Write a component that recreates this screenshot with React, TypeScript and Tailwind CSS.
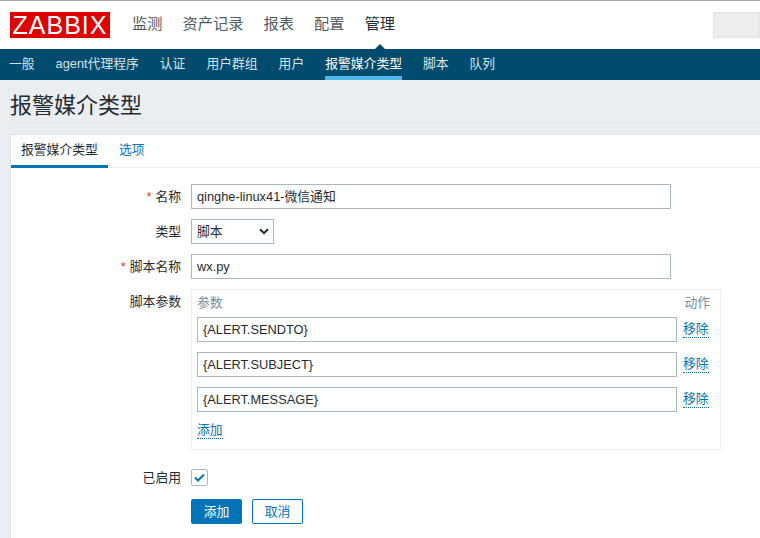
import React from 'react';

const FONT = "font-['Liberation_Sans','Noto_Sans_CJK_SC',sans-serif]";

const mainNav = ['监测', '资产记录', '报表', '配置', '管理'];
const subNav = ['一般', 'agent代理程序', '认证', '用户群组', '用户', '报警媒介类型', '脚本', '队列'];
const params = ['{ALERT.SENDTO}', '{ALERT.SUBJECT}', '{ALERT.MESSAGE}'];

const Label = ({ text, required }: { text: string; required?: boolean }) => (
    <div className="w-[170px] shrink-0 text-right text-[12.8px] leading-[25px] text-[#1f2c33]">
        {required && <span className="mr-1 text-[#e33734]">*</span>}
        {text}
    </div>
);

const App = () => {
    return (
        <div className={`${FONT} h-[538px] w-[760px] overflow-hidden bg-[#ebeef0]`}>
            {/* Top nav */}
            <div className="flex h-[49px] items-start border-t border-[#a3a3a3] bg-white">
                <div className="ml-[10px] mt-[11px] flex h-[26px] w-[100px] items-center justify-center bg-[#e00000] text-[25px] leading-none tracking-[1px] text-white">
                    ZABBIX
                </div>
                <div className="ml-[22px] mt-[14px] flex gap-[20.2px] text-[15.2px] leading-[18px]">
                    {mainNav.map((item) => (
                        <a
                            key={item}
                            className={`relative h-[34px] ${item === '管理' ? 'text-[#1f2c33]' : 'text-[#4e5b63]'}`}
                        >
                            {item}
                            {item === '管理' && (
                                <span className="absolute bottom-0 left-[10px] h-0 w-0 border-x-[5px] border-b-[5px] border-x-transparent border-b-[#004b6e]" />
                            )}
                        </a>
                    ))}
                </div>
                <div className="ml-auto mt-[11px] h-[26px] w-[47px] border border-[#e3e3e3] bg-[#ededed]" />
            </div>

            {/* Sub nav */}
            <div className="flex h-[31px] gap-[21px] bg-[#004b6e] pl-[9px] text-[12.8px] leading-[29px] text-[#d5e4ec]">
                {subNav.map((item) => (
                    <a
                        key={item}
                        className={
                            item === '报警媒介类型'
                                ? 'h-[31px] border-b-[4px] border-[#4fb8ea] text-white'
                                : ''
                        }
                    >
                        {item}
                    </a>
                ))}
            </div>

            {/* Title */}
            <div className="ml-[10px] h-[43px] border-b border-[#e0e4e7] pt-[10px] text-[22px] leading-[32px] text-[#1f2c33]">
                报警媒介类型
            </div>

            {/* Panel */}
            <div className="ml-[10px] mt-[11px] h-[420px] w-[770px] border border-[#dfe4e7] bg-white">
                <div className="flex h-[33px] border-b border-[#ebeef0] text-[12.8px]">
                    <div className="h-[33px] w-[97px] border-b-[3px] border-[#0275b8] pl-[10px] leading-[30px] text-[#1f2c33]">
                        报警媒介类型
                    </div>
                    <a className="ml-[11px] leading-[30px] text-[#0275b8]">选项</a>
                </div>

                <div className="flex flex-col gap-[10px] pt-[16px]">
                    <div className="flex gap-[10px]">
                        <Label text="名称" required />
                        <input
                            readOnly
                            value="qinghe-linux41-微信通知"
                            className="h-[25px] w-[480px] border border-[#a8b8c0] px-[5px] pb-[2px] text-[12.8px] text-[#1f2c33] outline-none"
                        />
                    </div>
                    <div className="flex gap-[10px]">
                        <Label text="类型" />
                        <div className="relative h-[25px] w-[83px]">
                            <select className="h-[25px] w-[83px] appearance-none border border-[#a8b8c0] bg-white px-[5px] text-[12.8px] text-[#1f2c33] outline-none">
                                <option>脚本</option>
                            </select>
                            <svg className="absolute right-[5px] top-[9px]" width="10" height="7" viewBox="0 0 10 7" fill="none">
                                <path d="M1 1.2 L5 5.2 L9 1.2" stroke="#1f2c33" strokeWidth="2" />
                            </svg>
                        </div>
                    </div>
                    <div className="flex gap-[10px]">
                        <Label text="脚本名称" required />
                        <input
                            readOnly
                            value="wx.py"
                            className="h-[25px] w-[480px] border border-[#a8b8c0] px-[5px] text-[12.8px] text-[#1f2c33] outline-none"
                        />
                    </div>
                    <div className="flex gap-[10px]">
                        <Label text="脚本参数" />
                        <div className="h-[161px] w-[530px] border border-[#ebeef0] px-[5px] pt-[4px]">
                            <div className="flex h-[23px] justify-between pr-[5px] text-[12.8px] leading-[18px] text-[#768d99]">
                                <span>参数</span>
                                <span>动作</span>
                            </div>
                            <div className="flex flex-col gap-[10px]">
                                {params.map((param) => (
                                    <div key={param} className="flex items-center gap-[6px]">
                                        <input
                                            readOnly
                                            value={param}
                                            className="h-[25px] w-[480px] border border-[#a8b8c0] px-[5px] text-[12.8px] text-[#1f2c33] outline-none"
                                        />
                                        <a className="border-b border-dotted border-[#0275b8] text-[12.8px] leading-[16px] text-[#0275b8]">
                                            移除
                                        </a>
                                    </div>
                                ))}
                            </div>
                            <a className="mt-[10px] inline-block border-b border-dotted border-[#0275b8] text-[12.8px] leading-[16px] text-[#0275b8]">
                                添加
                            </a>
                        </div>
                    </div>
                    <div className="mt-[5px] flex h-[24px] gap-[10px]">
                        <Label text="已启用" />
                        <div className="flex h-[25px] items-center">
                            <div className="flex h-[17px] w-[17px] items-center justify-center rounded-[2px] border border-[#a8b8c0]">
                                <svg width="11" height="9" viewBox="0 0 11 9" fill="none">
                                    <path d="M1 4.5 L4 7.5 L10 1.5" stroke="#0275b8" strokeWidth="2" />
                                </svg>
                            </div>
                        </div>
                    </div>
                    <div className="ml-[180px] flex gap-[10px]">
                        <button className="h-[25px] w-[51px] rounded-[2px] bg-[#0275b8] text-[12.8px] text-white">
                            添加
                        </button>
                        <button className="h-[25px] w-[51px] rounded-[2px] border border-[#0275b8] bg-white text-[12.8px] text-[#0275b8]">
                            取消
                        </button>
                    </div>
                </div>
            </div>
        </div>
    );
};

export default App;
